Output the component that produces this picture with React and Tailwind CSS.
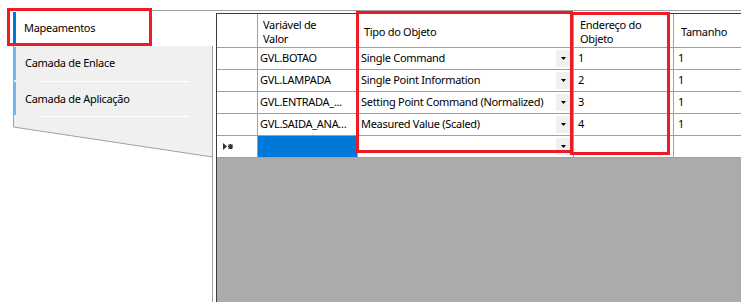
import React from 'react';

const rows = [
  { name: 'GVL.BOTAO', type: 'Single Command', addr: '1', size: '1' },
  { name: 'GVL.LAMPADA', type: 'Single Point Information', addr: '2', size: '1' },
  { name: 'GVL.ENTRADA_...', type: 'Setting Point Command (Normalized)', addr: '3', size: '1' },
  { name: 'GVL.SAIDA_ANA...', type: 'Measured Value (Scaled)', addr: '4', size: '1' },
];

function DropButton() {
  return (
    <div className="mr-[2px] flex h-[17px] w-[15px] shrink-0 items-center justify-center bg-[#f0f0f0]">
      <svg width="5" height="3" viewBox="0 0 5 3">
        <path d="M0 0 H5 L2.5 3 Z" fill="#000" />
      </svg>
    </div>
  );
}

function Tabs() {
  return (
    <div className="relative w-[203px] shrink-0">
      <svg className="absolute left-0 top-0" width="203" height="291" viewBox="0 0 203 291">
        <polygon points="0,35 200,35 200,146 0,116" fill="#f0f0f0" />
        <polyline points="0.5,35 0.5,116 199.5,146" fill="none" stroke="#a0a0a0" />
        <line x1="199.5" y1="35" x2="199.5" y2="291" stroke="#a0a0a0" />
      </svg>
      <div className="relative">
        <div className="flex h-[35px] bg-white">
          <span className="my-px w-[3px] bg-[#0078d7]" />
          <span className="flex items-center pl-[8px]">Mapeamentos</span>
        </div>
        <div className="flex h-[35px]">
          <span className="my-px w-[3px] bg-[#6cb8f8]" />
          <span className="flex items-center pl-[9px]">Camada de Enlace</span>
        </div>
        <div className="ml-[26px] h-px w-[150px] bg-white" />
        <div className="flex h-[34px]">
          <span className="mb-px w-[3px] bg-[#6cb8f8]" />
          <span className="flex items-center pl-[9px]">Camada de Aplicação</span>
        </div>
        <div className="ml-[26px] h-px w-[150px] bg-white" />
      </div>
    </div>
  );
}

function Grid() {
  const cell = 'flex items-center whitespace-nowrap border-r border-b border-[#a0a0a0] shrink-0';
  return (
    <div className="mt-[2px] flex min-w-0 flex-1 flex-col border-l border-t border-[#3c3c3c] bg-white">
      <div className="flex h-[34px] leading-[14px]">
        <div className={`${cell} w-[41px]`} />
        <div className={`${cell} w-[100px] pl-[5px] pt-[2px]`}>Variável de<br />Valor</div>
        <div className={`${cell} w-[216px] pl-[6px] pt-[2px]`}>Tipo do Objeto</div>
        <div className={`${cell} w-[100px] pl-[6px] pt-[2px]`}>Endereço do<br />Objeto</div>
        <div className="flex flex-1 items-center border-b border-[#a0a0a0] pl-[7px] pt-[2px]">Tamanho</div>
      </div>
      {rows.map((r) => (
        <div key={r.name} className="flex h-[22px]">
          <div className={`${cell} w-[41px]`} />
          <div className={`${cell} w-[100px] pl-[2px]`}>{r.name}</div>
          <div className={`${cell} w-[216px] justify-between pl-[3px]`}>
            <span>{r.type}</span>
            <DropButton />
          </div>
          <div className={`${cell} w-[100px] pl-[4px]`}>{r.addr}</div>
          <div className="flex flex-1 items-center border-b border-[#a0a0a0] pl-[4px]">{r.size}</div>
        </div>
      ))}
      <div className="flex h-[22px]">
        <div className={`${cell} w-[41px] pl-[6px]`}>
          <svg width="11" height="7" viewBox="0 0 11 7">
            <path d="M0 0 V7 L4 3.5 Z" fill="#333" />
            <path d="M5.5 1.5 L9.5 5.5 M9.5 1.5 L5.5 5.5 M7.5 1 V6 M5 3.5 H10" stroke="#333" strokeWidth="1.2" />
          </svg>
        </div>
        <div className={`${cell} w-[100px] bg-[#0078d7]`} />
        <div className={`${cell} w-[216px] justify-end`}>
          <DropButton />
        </div>
        <div className={`${cell} w-[100px]`} />
        <div className="flex-1 border-b border-[#a0a0a0]" />
      </div>
      <div className="flex-1 bg-[#ababab]" />
    </div>
  );
}

export default function App() {
  return (
    <div className="relative h-[302px] w-[741px] overflow-hidden bg-white font-['Noto_Sans',sans-serif] text-[11px] tracking-[-0.3px] text-black">
      <div className="flex h-full flex-col pl-[13px] pt-[10px]">
        <div className="flex flex-1 border-t border-[#a0a0a0]">
          <Tabs />
          <Grid />
        </div>
      </div>
      <div className="absolute left-[7px] top-[8px] h-[38px] w-[145px] border-[3px] border-[#ed1c24]" />
      <div className="absolute left-[356px] top-[11px] h-[142px] w-[217px] border-[3px] border-[#ed1c24]" />
      <div className="absolute left-[570px] top-[12px] h-[143px] w-[100px] border-[3px] border-[#ed1c24]" />
    </div>
  );
}
